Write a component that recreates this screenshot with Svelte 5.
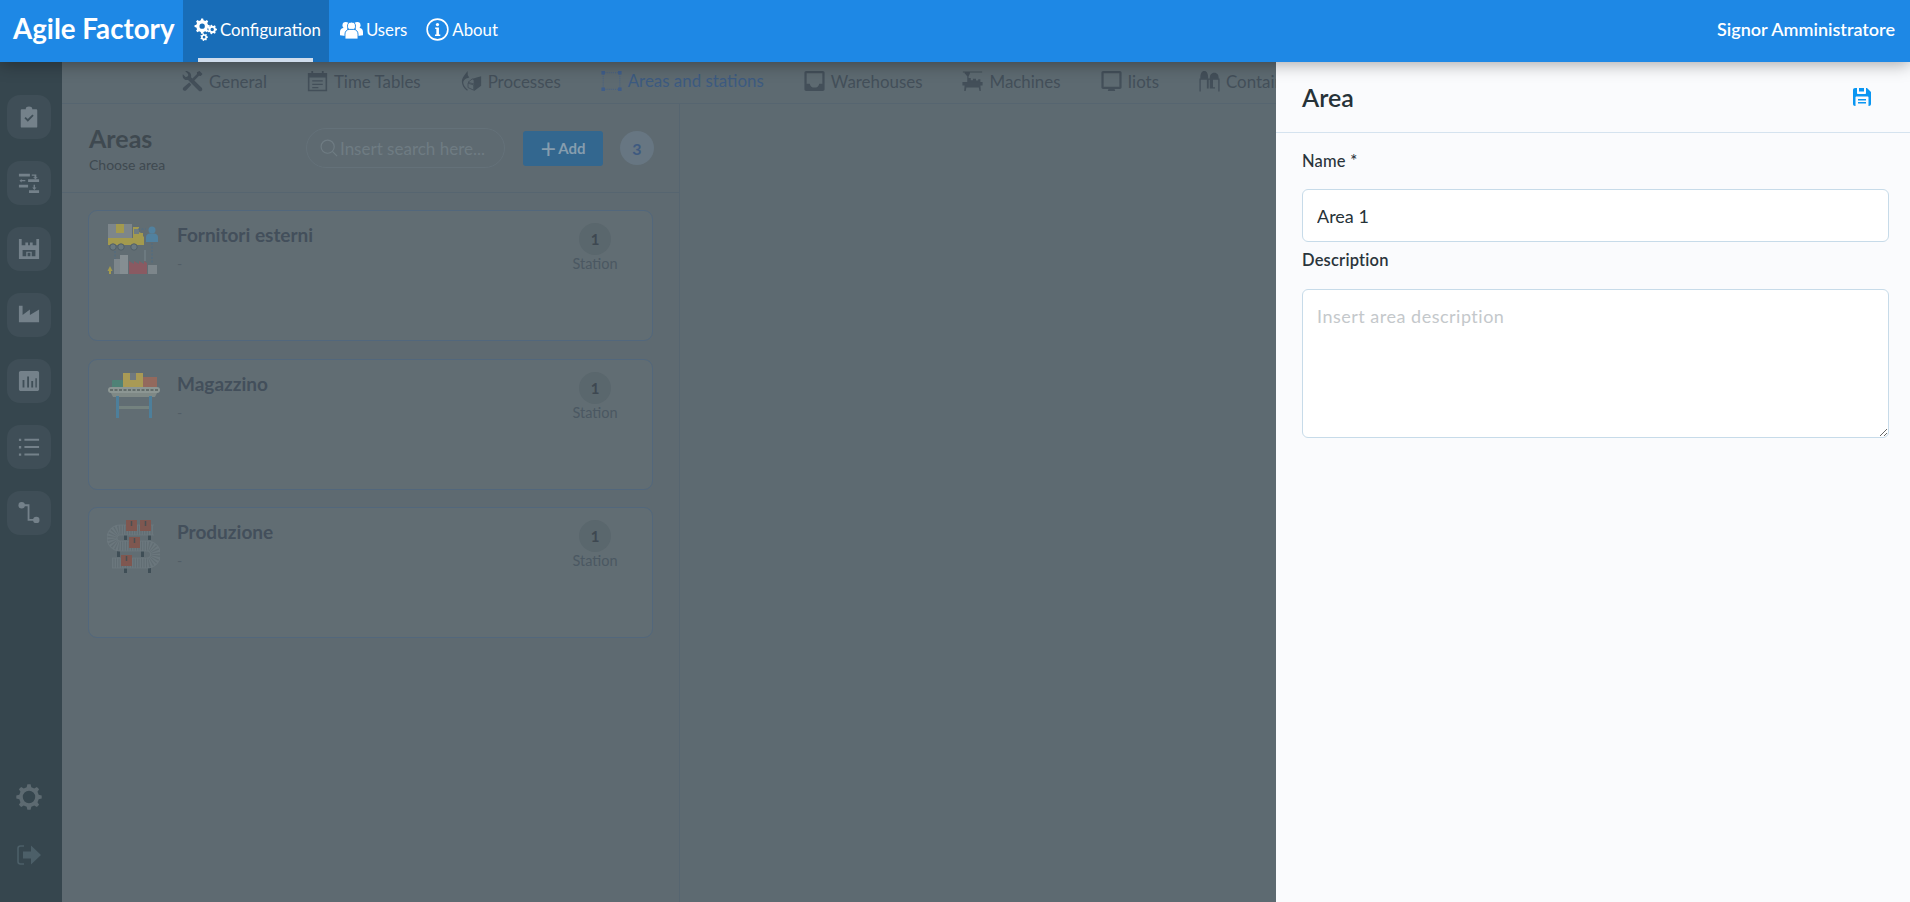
<script>
  // toothed wheel, used by the nav gears and the sidebar settings icon
  function gearPath(cx, cy, r, hole, teeth) {
    const pts = [];
    const step = (Math.PI * 2) / teeth;
    for (let t = 0; t < teeth; t++) {
      const a = t * step;
      const spots = [
        [a - step * 0.3, r * 0.78],
        [a - step * 0.16, r],
        [a + step * 0.16, r],
        [a + step * 0.3, r * 0.78]
      ];
      for (const [ang, rad] of spots) {
        pts.push(`${(cx + Math.cos(ang) * rad).toFixed(2)} ${(cy + Math.sin(ang) * rad).toFixed(2)}`);
      }
    }
    const ring = `M${pts.join("L")}Z`;
    const inner = `M${cx - hole} ${cy}a${hole} ${hole} 0 1 0 ${hole * 2} 0a${hole} ${hole} 0 1 0 ${-hole * 2} 0Z`;
    return ring + inner;
  }

  const tabs = [
    { id: "general", label: "General" },
    { id: "time", label: "Time Tables" },
    { id: "process", label: "Processes" },
    { id: "areas", label: "Areas and stations", active: true },
    { id: "warehouse", label: "Warehouses" },
    { id: "machines", label: "Machines" },
    { id: "iiots", label: "Iiots" },
    { id: "containers", label: "Containers" }
  ];

  const sideItems = ["tasks", "flow", "warehouse", "factory", "chart", "list", "route"];

  const areas = [
    { name: "Fornitori esterni", art: "truck" },
    { name: "Magazzino", art: "table" },
    { name: "Produzione", art: "belt" }
  ];
</script>

<div class="app">
  <header class="topbar">
    <div class="logo">Agile Factory</div>
    <nav class="mainnav">
      <a class="navlink active" href="#config">
        <svg class="navicon" viewBox="0 0 24 24" aria-hidden="true">
          <path fill-rule="evenodd" d={gearPath(8.5, 8.5, 8, 2.8, 8)} />
          <path fill-rule="evenodd" d={gearPath(19, 12, 5, 1.8, 7)} />
          <path fill-rule="evenodd" d={gearPath(10.5, 20, 4, 1.4, 7)} />
        </svg>
        Configuration
      </a>
      <a class="navlink" href="#users">
        <svg class="navicon" viewBox="0 0 24 24" aria-hidden="true">
          <circle cx="6" cy="7.5" r="3.4" />
          <circle cx="18" cy="7.5" r="3.4" />
          <path d="M0 18v-3.5c0-2.4 1.7-4 3.6-4h4v8.5z" />
          <path d="M24 18v-3.5c0-2.4-1.7-4-3.6-4h-4v8.5z" />
          <circle cx="12" cy="8.5" r="4.2" stroke="#1e88e5" stroke-width="1" />
          <path d="M5.2 22v-5.2c0-2.9 2.1-4.9 4.5-4.9h4.6c2.4 0 4.5 2 4.5 4.9V22z" stroke="#1e88e5" stroke-width="1" />
        </svg>
        Users
      </a>
      <a class="navlink" href="#about">
        <svg class="navicon" viewBox="0 0 24 24" aria-hidden="true">
          <circle cx="12" cy="12" r="10.8" fill="none" stroke="currentColor" stroke-width="1.7" />
          <circle cx="12" cy="6.8" r="1.7" />
          <path d="M9.6 10h3.9v7.2h1.4v1.6H9.4v-1.6h1.4v-5.6H9.6z" />
        </svg>
        About
      </a>
    </nav>
    <div class="username">Signor Amministratore</div>
  </header>

  <div class="body">
    <aside class="sidebar">
      {#each sideItems as item}
        <button class="sidebtn" type="button" aria-label={item}>
          <svg viewBox="0 0 24 24" aria-hidden="true">
            {#if item === "tasks"}
              <path fill-rule="evenodd" d="M4 3.5h4.5V2.6C8.5 1.6 10 .6 12 .6s3.5 1 3.5 2v.9H20c.6 0 1 .4 1 1v18c0 .6-.4 1-1 1H4c-.6 0-1-.4-1-1v-18c0-.6.4-1 1-1zM7 13.4l1.4-1.4 2.3 2.3 5-5 1.4 1.4-6.4 6.4z" />
            {:else if item === "flow"}
              <path d="M1 2h12v3H1zM11 8h12v3H11zM1 14h10v3H1zM12 20h11v3H12zM15 2.800h5v3h1.600L19 8 16.400 5.800H18V4.200h-3zM8 10.200H4v1.300L1.600 9.500 4 7.500v1.300h4zM17 14h1.500v3h1.600L17.800 19.500 15.500 17H17z" />
            {:else if item === "warehouse"}
              <path fill-rule="evenodd" d="M1 1h3v7h4V5h3v3h2V5h3v3h4V1h3v22H1zM5 13v7h4v-5h6v5h4v-7zM10.500 16v4h3v-4z" />
            {:else if item === "factory"}
              <path d="M1 2h4v10l8-6v6l10-6v14H1z" />
            {:else if item === "chart"}
              <path fill-rule="evenodd" d="M3 1h18c1.100 0 2 .9 2 2v18c0 1.100-.9 2-2 2H3c-1.100 0-2-.9-2-2V3c0-1.100.9-2 2-2zM5 11v8h2v-8zM10 7v12h2V7zM14.500 12v7h2v-7zM19 9v10h1.500V9z" />
            {:else if item === "list"}
              <path d="M1 3h2.500v2.500H1zM7 3h16v2.200H7zM1 11h2.500v2.500H1zM7 11h16v2.200H7zM1 19h2.500v2.500H1zM7 19h16v2.200H7z" />
            {:else}
              <circle cx="4" cy="3.500" r="3.500" />
              <circle cx="20" cy="19.500" r="3.500" />
              <path d="M4 3.500h7.500v16H20" fill="none" stroke="currentColor" stroke-width="2" />
            {/if}
          </svg>
        </button>
      {/each}
      <div class="sidefoot">
        <svg class="cog" viewBox="0 0 26 26" aria-hidden="true">
          <path fill-rule="evenodd" d={gearPath(13, 13, 12.8, 6.2, 8)} />
        </svg>
        <svg class="logout" viewBox="0 0 24 20" aria-hidden="true">
          <path d="M7 1H3.500C2 1 1 2 1 3.500v13C1 18 2 19 3.500 19H7" fill="none" stroke="currentColor" stroke-width="1.600" />
          <path d="M6 6.500h8V.5L24 10 14 19.500v-6H6z" />
        </svg>
      </div>
    </aside>

    <main class="content">
      <div class="tabs">
        {#each tabs as tab}
          <div class="tab" class:active={tab.active}>
            <svg class="tabicon" viewBox="0 0 24 24" aria-hidden="true">
              {#if tab.id === "general"}
                <path d="M3.600.6 7 4v2.300L4.400 7.700 1 4.300C.3 6.600.9 8.700 2.600 10c1.300 1 2.800 1.200 4.300.8L19.200 23c.9.9 2.400.9 3.300 0s.9-2.300 0-3.200L10.300 7.600c.5-1.800 0-3.800-1.500-5.300C7.400 1 5.400.3 3.600.6z" />
                <path d="M20 .6 23.400 4l-2 2.200-2-.2-7.200 7.300-2.300-2.300 7.300-7.100-.2-1.800zM8.300 13.800l2.400 2.400-5.900 6.400c-.9.9-2.300.9-3.200 0s-.9-2.300 0-3.200z" />
              {:else if tab.id === "time"}
                <path fill-rule="evenodd" d="M5 .5h2v2.300h10V.5h2v2.300h4v21H1V2.800h4zM2.800 8v14h18.400V8zM6 11h12v1.600H6zM6 15h12v1.600H6zM6 18.800h7v1.600H6z" />
              {:else if tab.id === "process"}
                <path d="M13 9.500 23 6.500v11l-8 6V11.500z" />
                <path d="M13 9.500 8 13.500l7 2v-4zM8 14.500l6.500 2v6l-6.500-3z" fill="none" stroke="currentColor" stroke-width="1" />
                <path d="M7.500.5C5 4 1 8 1 12.500c0 4 2 7.500 6 10.500l.8-1C4.500 19.500 2.500 16 2.500 13 3.500 10.500 5 9 9.500 8L7.800 5.500z" />
              {:else if tab.id === "areas"}
                <path d="M4 2.500h16M4 21.500h16M2.500 4v16M21.500 4v16" fill="none" stroke="currentColor" stroke-width=".8" stroke-dasharray="1.200 1.200" />
                <path d="M.5.5h4v4h-4zM19.500.5h4v4h-4zM.5 19.500h4v4h-4zM19.500 19.500h4v4h-4z" />
              {:else if tab.id === "warehouse"}
                <path fill-rule="evenodd" d="M2.500.5h19c1.100 0 2 .9 2 2v19c0 1.100-.9 2-2 2h-19c-1.100 0-2-.9-2-2v-19c0-1.100.9-2 2-2zM3 3v12h3.500c.8 2.800 2.500 4.500 5.500 4.500s4.700-1.700 5.500-4.500H21V3z" />
              {:else if tab.id === "machines"}
                <path d="M1 1h22v1.200H1zM3 2.200h6v1.500L7.500 6.500v2H10V11h2.500V9.500H16v2h2.500V10H21v3h2.500v4H21v-.5l.5 7H20l-.8-4H5l-.8 4H2.500l.5-7V17H.5v-4H6V6.500L3 3z" />
              {:else if tab.id === "iiots"}
                <path fill-rule="evenodd" d="M2.500.5h19c1.100 0 2 .9 2 2v16.500c0 1.100-.9 2-2 2h-6l.7 2.500H7.800l.7-2.500h-6c-1.100 0-2-.9-2-2V2.500c0-1.100.9-2 2-2zM3 3v15.500h18V3z" />
              {:else if tab.id === "containers"}
                <path fill-rule="evenodd" d="M1.500 9C1.500 3.500 3 .5 6 .5s4.500 3 4.500 8.500h1.800c0-4 1.800-6.500 5.200-6.500s5 2.500 5 6.500h1V24h-1.500V10.500H16V19h2.300v1.500h-6V10.500h-1.200V20.500H9V10.500H2V24H.5V9z" />
              {/if}
            </svg>
            <span>{tab.label}</span>
          </div>
        {/each}
      </div>

      <section class="areas">
        <div class="areas-head">
          <div class="areas-title">
            <h2>Areas</h2>
            <small>Choose area</small>
          </div>
          <div class="search">
            <svg viewBox="0 0 20 20" aria-hidden="true">
              <circle cx="8.500" cy="8.500" r="7.300" fill="none" stroke="currentColor" stroke-width="1.300" />
              <path d="m13.800 13.800 5.200 5.200" stroke="currentColor" stroke-width="1.300" />
            </svg>
            <input type="text" placeholder="Insert search here..." />
          </div>
          <button class="addbtn" type="button"><span class="plus">+</span>Add</button>
          <div class="total">3</div>
        </div>

        <div class="cards">
          {#each areas as area}
            <article class="card">
              <svg class="art" viewBox="0 0 53 53" aria-hidden="true">
                {#if area.art === "truck"}
                  <rect x="1" y="1" width="24" height="21" fill="#7d868b" />
                  <rect x="9" y="1" width="8" height="9" fill="#a39a4e" />
                  <path d="M1 15h25V4h6v5l2 1 2 0 0 3 1 1v8H1z" fill="#a39a4e" />
                  <rect x="27" y="6" width="5" height="5" fill="#6e7b80" />
                  <circle cx="6" cy="24" r="3.200" fill="#6b7a80" stroke="#515f67" />
                  <circle cx="14" cy="24" r="3.200" fill="#6b7a80" stroke="#515f67" />
                  <circle cx="27" cy="24" r="3.200" fill="#6b7a80" stroke="#515f67" />
                  <circle cx="45" cy="7" r="3.500" fill="#51819f" />
                  <path d="M39 19v-5c0-2 2-3.500 4-3.500h4c2 0 4 1.500 4 3.500v5z" fill="#51819f" />
                  <path d="M31 6h8M45 20v20M8 28v10" stroke="#4e6d85" stroke-dasharray="2 1.500" fill="none" />
                  <rect x="7" y="36" width="14" height="15" fill="#7d868b" />
                  <rect x="13" y="32" width="8" height="19" fill="#858e92" />
                  <path d="M22 51V38l5 3 0-3 5 3 0-3 5 3 0-3 3 2v11z" fill="#8a5a62" />
                  <rect x="37" y="27" width="2" height="11" fill="#6d7a80" />
                  <rect x="41" y="42" width="9" height="9" fill="#7d868b" />
                  <path d="M3 43l2.500 5H.5z" fill="#a39a4e" />
                  <rect x="2" y="47" width="2" height="4" fill="#a39a4e" />
                {:else if area.art === "table"}
                  <rect x="5" y="8" width="11" height="8" rx="1" fill="#4f8276" />
                  <rect x="16" y="1" width="20" height="15" fill="#a99a55" />
                  <rect x="23" y="1" width="6" height="7" fill="#70797f" />
                  <rect x="36" y="5" width="14" height="11" fill="#93695d" />
                  <rect x="1" y="15" width="52" height="6" rx="3" fill="#8c9693" />
                  <path d="M3 18h48" stroke="#55605f" stroke-width="1.300" stroke-dasharray="3 1.500" />
                  <path d="M4 21h46l-2 4H6z" fill="#7f8986" />
                  <rect x="9" y="24" width="3" height="22" fill="#4d7f9b" />
                  <rect x="42" y="24" width="3" height="22" fill="#4d7f9b" />
                  <rect x="12" y="34" width="30" height="3" fill="#74827f" />
                {:else}
                  <rect x="17" y="14" width="3" height="6" fill="#3f4e56" />
                  <rect x="41" y="14" width="3" height="6" fill="#3f4e56" />
                  <rect x="10" y="31" width="3" height="6" fill="#3f4e56" />
                  <rect x="34" y="31" width="3" height="6" fill="#3f4e56" />
                  <rect x="17" y="48" width="3" height="5" fill="#3f4e56" />
                  <rect x="41" y="48" width="3" height="5" fill="#3f4e56" />
                  <path class="belt" d="M47 10H13A8 8 0 0 0 13 26H40A8.500 8.500 0 0 1 40 43H5" stroke="#6b777d" stroke-width="11" />
                  <path class="belt" d="M47 10H13A8 8 0 0 0 13 26H40A8.500 8.500 0 0 1 40 43H5" stroke="#616d73" stroke-width="9" stroke-dasharray="1 1.500" />
                  <rect x="19" y="0" width="11" height="11" fill="#7f5750" />
                  <rect x="33" y="0" width="11" height="11" fill="#7f5750" />
                  <rect x="22" y="17" width="11" height="11" fill="#7f5750" />
                  <rect x="14" y="35" width="11" height="11" fill="#7f5750" />
                  <path d="M24.500 1v5M38.500 1v5M27.500 18v5M19.500 36v5" stroke="#4a4f52" stroke-width="1.500" />
                {/if}
              </svg>
              <div class="card-text">
                <h3>{area.name}</h3>
                <p>-</p>
              </div>
              <div class="stations">
                <div class="count">1</div>
                <span>Station</span>
              </div>
            </article>
          {/each}
        </div>
      </section>
    </main>

    <aside class="panel">
      <div class="panel-head">
        <h2>Area</h2>
        <button class="save" type="button" aria-label="Save">
          <svg viewBox="0 0 18 18" aria-hidden="true">
            <path fill-rule="evenodd" d="M2 0h12l4 4v12c0 1.100-.9 2-2 2H2c-1.100 0-2-.9-2-2V2C0 .9.9 0 2 0zM4 0v5c0 .6.4 1 1 1h7c.6 0 1-.4 1-1V0h-2v3.500H6V0zM3.500 8.500c-.6 0-1 .4-1 1V18h13V9.500c0-.6-.4-1-1-1zM5 11h8v1.500H5zM5 14h8v1.500H5z" />
          </svg>
        </button>
      </div>
      <form class="panel-form">
        <label class="name-label" for="area-name">Name *</label>
        <input id="area-name" type="text" value="Area 1" />
        <label class="desc-label" for="area-desc">Description</label>
        <textarea id="area-desc" placeholder="Insert area description"></textarea>
      </form>
    </aside>
  </div>
</div>

<style>
  :global(body) {
    margin: 0;
    background: #5d6a71;
  }

  .app {
    display: flex;
    flex-direction: column;
    height: 100vh;
    overflow: hidden;
    font-family: Lato, "Liberation Sans", sans-serif;
    color: #263238;
  }

  /* top bar */
  .topbar {
    position: relative;
    z-index: 3;
    flex: 0 0 62px;
    display: flex;
    align-items: stretch;
    background: #1e88e5;
    color: #fff;
    box-shadow: 0 2px 16px rgba(0, 0, 0, 0.35);
  }

  .logo {
    width: 183px;
    padding-left: 13px;
    box-sizing: border-box;
    font-size: 27.700px;
    font-weight: 700;
    line-height: 58px;
    white-space: nowrap;
  }

  .mainnav {
    display: flex;
    align-items: stretch;
  }

  .navlink {
    position: relative;
    display: flex;
    align-items: center;
    gap: 3px;
    padding: 0 8px 3px 11px;
    color: #fff;
    font-size: 16.800px;
    text-decoration: none;
  }

  .navlink.active {
    background: #186db8;
  }

  .navlink.active::after {
    content: "";
    position: absolute;
    left: 15px;
    right: 16px;
    bottom: 0;
    height: 4px;
    background: #cfdcec;
  }

  .navicon {
    width: 23px;
    height: 23px;
    fill: currentColor;
  }

  .username {
    margin-left: auto;
    padding-right: 15px;
    font-size: 18px;
    font-weight: 600;
    line-height: 58px;
  }

  .body {
    position: relative;
    flex: 1;
    display: flex;
    min-height: 0;
  }

  /* left rail */
  .sidebar {
    flex: 0 0 62px;
    display: flex;
    flex-direction: column;
    align-items: center;
    gap: 22px;
    padding: 33px 4px 0 0;
    box-sizing: border-box;
    background: #36464e;
  }

  .sidebtn {
    flex: none;
    width: 44px;
    height: 44px;
    padding: 0;
    display: grid;
    place-items: center;
    border: none;
    border-radius: 13px;
    background: #3f4e57;
    color: #74818a;
  }

  .sidebtn svg {
    width: 22px;
    height: 22px;
    fill: currentColor;
  }

  .sidefoot {
    margin-top: auto;
    padding-bottom: 37px;
    display: flex;
    flex-direction: column;
    align-items: center;
    gap: 35px;
  }

  .cog {
    width: 26px;
    height: 26px;
    fill: #5d6a71;
  }

  .logout {
    width: 24px;
    height: 20px;
    fill: #4c5f68;
    color: #4c5f68;
  }

  /* main content */
  .content {
    flex: 1;
    min-width: 0;
    display: flex;
    flex-direction: column;
    background: #5d6a71;
  }

  .tabs {
    flex: 0 0 42px;
    box-sizing: border-box;
    display: flex;
    padding-left: 97px;
    border-bottom: 1px solid #566570;
    overflow: hidden;
  }

  .tab {
    flex: none;
    display: flex;
    align-items: center;
    gap: 6px;
    height: 42px;
    box-sizing: border-box;
    padding: 0 17px 4px 23px;
    font-size: 16.900px;
    color: #434f59;
  }

  .tab.active {
    color: #3c5a80;
    border-bottom: 1.500px solid #4a6388;
  }

  .tabicon {
    width: 21px;
    height: 24px;
    fill: currentColor;
  }

  .tab.active .tabicon {
    fill: #3f5d8a;
    color: #3f5d8a;
  }

  .areas {
    flex: 1;
    width: 618px;
    box-sizing: border-box;
    border-right: 1px solid #566570;
    background: #5e6a71;
  }

  .areas-head {
    height: 89px;
    box-sizing: border-box;
    display: flex;
    align-items: center;
    padding: 0 25px 0 27px;
    border-bottom: 1px solid #566570;
  }

  .areas-title {
    flex: 1;
  }

  .areas-title h2 {
    margin: 0 0 3px;
    font-size: 25px;
    font-weight: 700;
    line-height: 30px;
    color: #3f4950;
  }

  .areas-title small {
    display: block;
    font-size: 14px;
    color: #3f4950;
  }

  .search {
    width: 199px;
    height: 40px;
    box-sizing: border-box;
    display: flex;
    align-items: center;
    gap: 2px;
    padding: 0 10px 0 13px;
    margin-right: 18px;
    border: 1px solid #647179;
    border-radius: 20px;
    background: #5e6a71;
    color: #6f7c83;
  }

  .search svg {
    flex: none;
    width: 18px;
    height: 18px;
  }

  .search input {
    flex: 1;
    min-width: 0;
    border: none;
    padding: 0;
    outline: none;
    background: none;
    font: inherit;
    font-size: 17px;
  }

  .search input::placeholder {
    color: #6f7c83;
    opacity: 1;
  }

  .addbtn {
    width: 80px;
    height: 35px;
    margin-right: 17px;
    display: flex;
    align-items: center;
    justify-content: center;
    gap: 2px;
    border: none;
    border-radius: 3px;
    background: #33678f;
    color: #869dae;
    font: inherit;
    font-size: 15px;
    font-weight: 700;
  }

  .plus {
    font-size: 27px;
    font-weight: 400;
    line-height: 20px;
  }

  .total {
    width: 34px;
    height: 34px;
    display: grid;
    place-items: center;
    border-radius: 50%;
    background: #677682;
    color: #3e5a80;
    font-size: 16px;
    font-weight: 700;
  }

  .cards {
    display: flex;
    flex-direction: column;
    gap: 17.500px;
    padding: 17px 26px 0;
  }

  .card {
    height: 131px;
    box-sizing: border-box;
    display: flex;
    align-items: flex-start;
    padding: 12px 34px 0 18px;
    border: 1px solid #52677c;
    border-radius: 9px;
    background: #616d73;
  }

  .art {
    flex: none;
    width: 53px;
    height: 53px;
    margin-right: 17px;
  }

  .belt {
    fill: none;
  }

  .card-text {
    flex: 1;
  }

  .card-text h3 {
    margin: 0;
    font-size: 19px;
    font-weight: 700;
    line-height: 23px;
    color: #434f5b;
  }

  .card-text p {
    margin: 9px 0 0;
    font-size: 14px;
    color: #515d66;
  }

  .stations {
    width: 46px;
    display: flex;
    flex-direction: column;
    align-items: center;
  }

  .count {
    width: 32px;
    height: 32px;
    display: grid;
    place-items: center;
    border-radius: 50%;
    background: #5a676d;
    color: #3e4851;
    font-size: 15px;
    font-weight: 700;
  }

  .stations span {
    font-size: 14.500px;
    color: #4b5862;
  }

  /* slide-over panel */
  .panel {
    position: absolute;
    z-index: 2;
    top: 0;
    right: 0;
    bottom: 0;
    width: 634px;
    background: #fafbfd;
  }

  .panel-head {
    height: 71px;
    box-sizing: border-box;
    display: flex;
    align-items: center;
    justify-content: space-between;
    padding: 0 39px 0 26px;
    border-bottom: 1px solid #d5e3ef;
  }

  .panel-head h2 {
    margin: 0;
    font-size: 25px;
    font-weight: 600;
    color: #263238;
  }

  .save {
    width: 18px;
    height: 18px;
    padding: 0;
    border: none;
    background: none;
  }

  .save svg {
    display: block;
    width: 18px;
    height: 18px;
    fill: #0a96f2;
  }

  .panel-form {
    display: flex;
    flex-direction: column;
    padding: 0 21px 0 26px;
  }

  label {
    font-size: 16.500px;
    font-weight: 500;
    letter-spacing: 0.200px;
    line-height: 20px;
    color: #2a343b;
  }

  .name-label {
    margin: 18px 0 18px;
  }

  .desc-label {
    margin: 8px 0 19px;
    font-weight: 600;
  }

  .panel-form input,
  .panel-form textarea {
    box-sizing: border-box;
    width: 100%;
    padding: 0 14px;
    border: 1px solid #c7dbe9;
    border-radius: 6px;
    outline: none;
    background: #fff;
    font: inherit;
    font-size: 18px;
    color: #263238;
  }

  .panel-form input {
    height: 53px;
  }

  .panel-form textarea {
    height: 149px;
    padding-top: 15px;
    letter-spacing: 0.500px;
  }

  .panel-form textarea::placeholder {
    color: #c4c8cb;
    opacity: 1;
  }
</style>
